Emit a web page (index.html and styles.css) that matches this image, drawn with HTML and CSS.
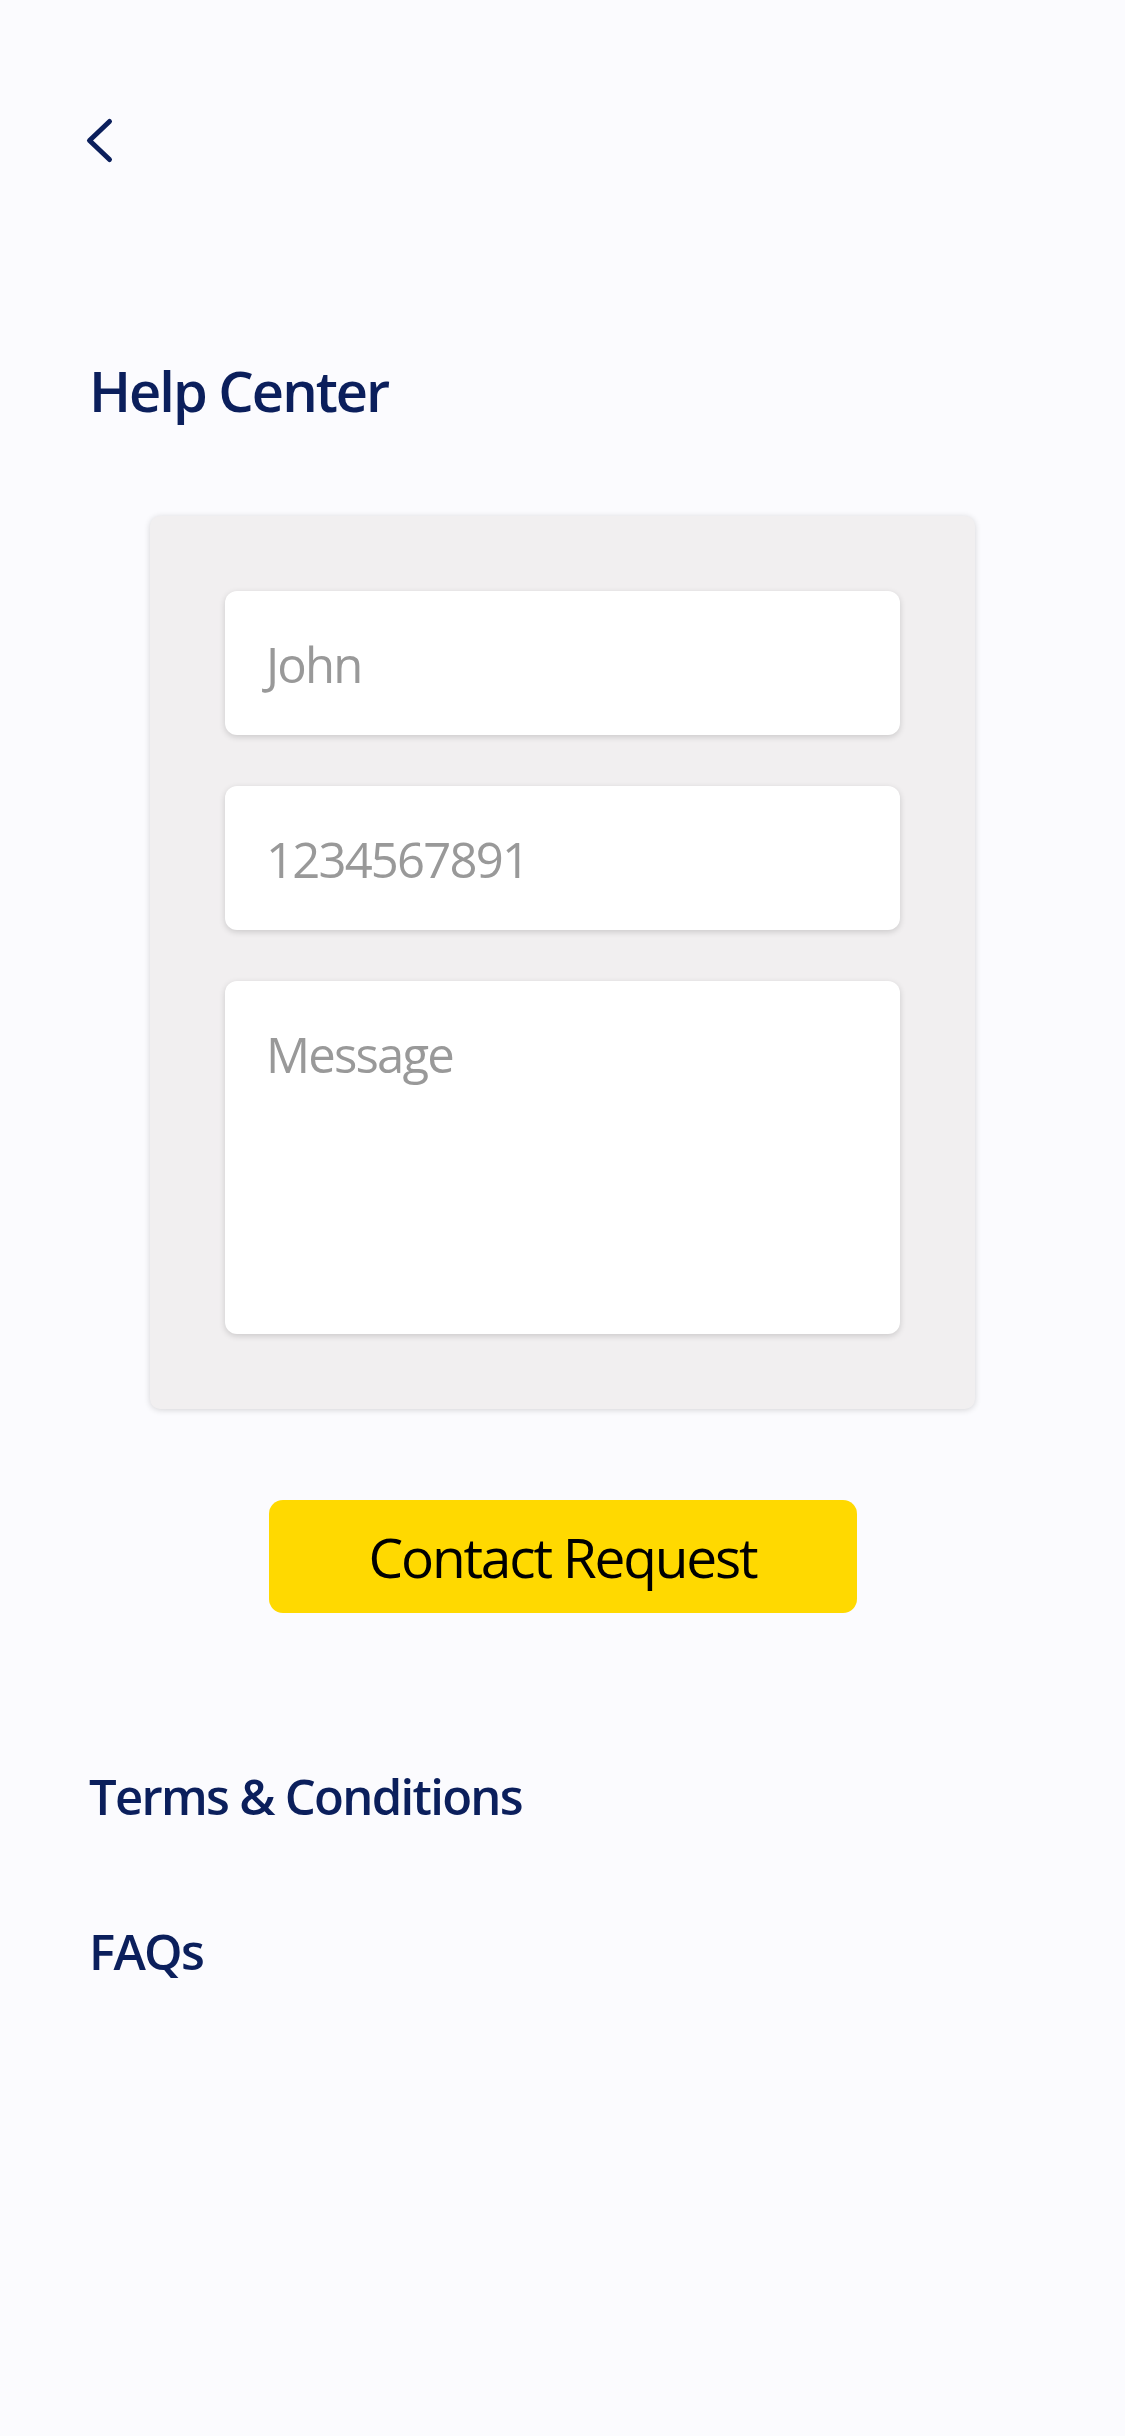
FILE: index.html
```html
<!DOCTYPE html>
<html lang="en">
<head>
<meta charset="utf-8">
<title>Help Center</title>
<link rel="stylesheet" href="styles.css">
</head>
<body>
<div class="page">
  <header class="topbar">
    <button class="back" aria-label="Back">
      <svg width="30" height="50" viewBox="0 0 30 50"><path d="M25.5 5.5 L5.5 24.5 L25.5 43.5" fill="none" stroke="#0b1f5c" stroke-width="5" stroke-linecap="round" stroke-linejoin="round"/></svg>
    </button>
  </header>
  <h1 class="title">Help Center</h1>
  <section class="card">
    <div class="field field-short"><span class="placeholder">John</span></div>
    <div class="field field-short"><span class="placeholder">1234567891</span></div>
    <div class="field field-tall"><span class="placeholder">Message</span></div>
  </section>
  <div class="actions">
    <button class="submit">Contact Request</button>
  </div>
  <nav class="links">
    <a class="link">Terms &amp; Conditions</a>
    <a class="link">FAQs</a>
  </nav>
</div>
</body>
</html>
```
FILE: styles.css
```css
* { box-sizing: border-box; }
html, body { margin: 0; padding: 0; }
body {
  background: #fbfbfe;
  font-family: "Open Sans", "Noto Sans", sans-serif;
  width: 1125px;
  min-height: 2436px;
}
.page { display: flex; flex-direction: column; }
.topbar { padding: 116px 0 0 84px; }
.back {
  display: block; padding: 0; margin: 0; border: 0; background: none;
  width: 30px; height: 50px;
}
.back svg { display: block; }
.title {
  margin: 191px 0 0 89px;
  font-size: 56px; line-height: 67px; font-weight: 600;
  letter-spacing: -2px;
  color: #0b1f5c;
}
.card {
  margin: 92px auto 0;
  width: 825px;
  padding: 75px;
  background: #f1eff0;
  border-radius: 10px;
  box-shadow: 0 1px 6px rgba(0,0,0,0.16);
  display: flex; flex-direction: column; gap: 51px;
}
.field {
  background: #ffffff;
  border-radius: 12px;
  box-shadow: 0 2px 6px rgba(0,0,0,0.16);
  padding: 44px 0 0 41px;
}
.field-short { height: 144px; }
.field-tall { height: 353px; }
.placeholder {
  display: block;
  font-size: 49px; line-height: 59px; font-weight: 400;
  letter-spacing: -1.8px;
  color: #999999;
}
.actions { display: flex; justify-content: center; margin-top: 91px; }
.submit {
  width: 588px; height: 113px;
  border: 0; border-radius: 14px;
  background: #ffd900;
  font-family: "Open Sans", "Noto Sans", sans-serif;
  font-size: 55px; font-weight: 400; color: #000000;
  letter-spacing: -2.2px;
  padding: 0;
}
.links { display: flex; flex-direction: column; gap: 96px; margin: 154px 0 0 89px; }
.link {
  display: block;
  font-size: 49px; line-height: 59px; font-weight: 600;
  letter-spacing: -1.7px;
  color: #0b1f5c;
}
```
